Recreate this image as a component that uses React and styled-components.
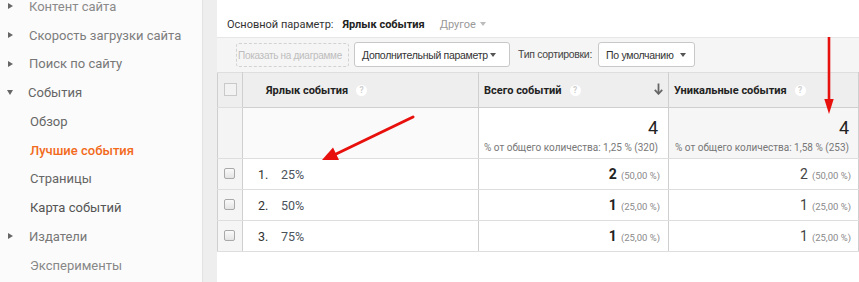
import styled, { createGlobalStyle } from "styled-components";

const GlobalStyle = createGlobalStyle`
  html, body {
    margin: 0;
    padding: 0;
    height: 282px;
    overflow: hidden;
    background: #eeeeee;
  }
  body {
    font-family: Roboto, "Liberation Sans", Arial, sans-serif;
    color: #333;
  }
`;

const Page = styled.div`
  position: relative;
  display: flex;
  gap: 14px;
  width: 859px;
  height: 282px;
  background: #eeeeee;
  overflow: hidden;
`;

const Sidebar = styled.nav`
  width: 203px;
  flex-shrink: 0;
  box-sizing: border-box;
  background: #fbfbfb;
  border-right: 1px solid #e2e2e2;
`;

const NavList = styled.ul`
  list-style: none;
  margin: -8px 0 0;
  padding: 0;
`;

const NavItem = styled.li`
  display: flex;
  align-items: center;
  height: 28.75px;
  padding-left: ${(p) => (p.$sub ? "30px" : "8px")};
  font-size: 13px;
  font-weight: ${(p) => (p.$active ? 500 : 400)};
  color: ${(p) => (p.$active ? "#f26a1b" : p.$color || "#6f6f6f")};
  white-space: nowrap;
`;

const Caret = styled.span`
  width: 0;
  height: 0;
  margin-right: ${(p) => (p.$open ? "15px" : "16px")};
  ${(p) =>
    p.$open
      ? `border-top: 5px solid #666;
         border-left: 3.5px solid transparent;
         border-right: 3.5px solid transparent;
         margin-left: -1px;`
      : `border-left: 5px solid #666;
         border-top: 3.5px solid transparent;
         border-bottom: 3.5px solid transparent;`}
`;

const Main = styled.main`
  flex: 1;
  display: flex;
  flex-direction: column;
  background: #fff;
`;

const DimensionBar = styled.div`
  height: 38px;
  box-sizing: border-box;
  display: flex;
  align-items: center;
  padding: 11px 0 0 10px;
  font-size: 11px;
  color: #333;
  border-bottom: 1px solid #e6e6e6;
`;

const PrimaryValue = styled.span`
  font-weight: 700;
  margin-left: 9px;
  color: #222;
`;

const OtherLink = styled.span`
  margin-left: 15px;
  color: #999;
  display: flex;
  align-items: center;
  gap: 4px;
`;

const SmallDown = styled.span`
  flex-shrink: 0;
  width: 0;
  height: 0;
  border-top: 4px solid ${(p) => p.$color || "#bbb"};
  border-left: 3.5px solid transparent;
  border-right: 3.5px solid transparent;
`;

const Toolbar = styled.div`
  height: 34px;
  box-sizing: border-box;
  display: flex;
  align-items: flex-start;
  padding: 5px 0 0 19px;
  background: #f5f5f5;
  font-family: "Liberation Sans", Arial, sans-serif;
  font-size: 10px;
  letter-spacing: -0.3px;
`;

const ChartButton = styled.div`
  width: 113px;
  height: 24px;
  flex-shrink: 0;
  box-sizing: border-box;
  border: 1px dashed #d2d2d2;
  border-radius: 3px;
  display: flex;
  align-items: center;
  color: #bdbdbd;
  white-space: nowrap;
  overflow: hidden;
  padding-left: 1px;
`;

const SelectButton = styled.div`
  width: ${(p) => p.$width}px;
  min-width: 0;
  flex-shrink: 0;
  height: 25px;
  box-sizing: border-box;
  margin-left: ${(p) => p.$gap || 0}px;
  margin-top: -1px;
  border: 1px solid #c8c8c8;
  border-radius: 3px;
  background: #fff;
  display: flex;
  align-items: center;
  justify-content: space-between;
  padding: 0 ${(p) => p.$padRight || 13}px 0 7px;
  color: #333;
  font-size: 10.5px;
  white-space: nowrap;
  overflow: hidden;
`;

const ToolbarLabel = styled.span`
  margin-left: 8px;
  line-height: 23px;
  color: #444;
  font-size: 10.5px;
`;

const Table = styled.table`
  border-collapse: collapse;
  table-layout: fixed;
  width: 642px;
  font-size: 12px;
`;

const HeadCell = styled.th`
  height: 35px;
  box-sizing: border-box;
  padding: 0 0 0 ${(p) => p.$pad || 5}px;
  background: #eeeeee;
  border: 1px solid #cfcfcf;
  border-top-color: #dedede;
  text-align: left;
  font-size: 11px;
  font-weight: 700;
  color: #222;
  vertical-align: middle;
`;

const HeadInner = styled.div`
  display: flex;
  align-items: center;
  padding-right: 5px;
`;

const Help = styled.span`
  width: 11px;
  height: 11px;
  border-radius: 50%;
  background: #fff;
  color: #cfcfcf;
  font-size: 8.5px;
  font-weight: 700;
  line-height: 11px;
  text-align: center;
  margin-left: 8px;
`;

const SortIcon = styled.svg`
  margin-left: auto;
  margin-top: -2px;
`;

const CheckCell = styled.td`
  width: 25px;
  padding: 0;
  background: ${(p) => p.$bg || "#f5f5f5"};
  border: 1px solid #dedede;
  border-left-color: #cfcfcf;
  border-right-color: #cfcfcf;
  text-align: center;
  vertical-align: ${(p) => p.$align || "top"};
`;

const HeadBox = styled.span`
  display: inline-block;
  width: 11px;
  height: 11px;
  margin-top: 2px;
  background: #f2f2f2;
  border: 1px solid #c9c9c9;
`;

const RowBox = styled.span`
  display: inline-block;
  width: 9px;
  height: 9px;
  margin: 9px 0 0 -1px;
  border: 1px solid #a9a9a9;
  border-radius: 2px;
  background: linear-gradient(#fafafa, #e4e4e4);
`;

const SummaryCell = styled.td`
  height: 51px;
  box-sizing: border-box;
  padding: 0 ${(p) => p.$pad || 10}px 0 0;
  background: ${(p) => p.$bg || "#fff"};
  border: 1px solid #dedede;
  border-right-color: #cfcfcf;
  text-align: right;
  vertical-align: top;
`;

const BigNumber = styled.div`
  font-size: 18px;
  color: #222;
  margin-top: 10px;
  line-height: 20px;
`;

const PercentNote = styled.div`
  font-size: 10px;
  color: #777;
  margin-top: 4px;
  white-space: nowrap;
`;

const Cell = styled.td`
  height: 31px;
  box-sizing: border-box;
  padding: 0 ${(p) => p.$pad || 8}px 0 ${(p) => p.$left || 0}px;
  border: 1px solid #dedede;
  border-right-color: #cfcfcf;
  text-align: ${(p) => (p.$right ? "right" : "left")};
  vertical-align: middle;
  white-space: nowrap;
`;

const Index = styled.span`
  display: inline-block;
  width: 23px;
  color: #333;
  font-size: 12.5px;
`;

const LabelLink = styled.span`
  color: #4b535c;
  font-size: 12.5px;
`;

const Value = styled.span`
  font-size: 14px;
  font-weight: ${(p) => (p.$bold ? 700 : 400)};
  color: ${(p) => (p.$bold ? "#222" : "#444")};
`;

const Share = styled.span`
  margin-left: 4px;
  font-size: 9.5px;
  color: #8a8a8a;
`;

const Annotations = styled.svg`
  position: absolute;
  left: 0;
  top: 0;
  pointer-events: none;
`;

const navItems = [
  { label: "Контент сайта", caret: true, color: "#8a8a8a" },
  { label: "Скорость загрузки сайта", caret: true, color: "#7d7d7d" },
  { label: "Поиск по сайту", caret: true, color: "#777" },
  { label: "События", caret: true, open: true, color: "#666" },
  { label: "Обзор", sub: true, color: "#666" },
  { label: "Лучшие события", sub: true, active: true },
  { label: "Страницы", sub: true, color: "#666" },
  { label: "Карта событий", sub: true, color: "#555" },
  { label: "Издатели", caret: true, color: "#777" },
  { label: "Эксперименты", sub: true, color: "#888" },
];

const rows = [
  { label: "25%", total: 2, share: "50,00 %" },
  { label: "50%", total: 1, share: "25,00 %" },
  { label: "75%", total: 1, share: "25,00 %" },
];

export default function App() {
  return (
    <Page>
      <GlobalStyle />
      <Sidebar>
        <NavList>
          {navItems.map((item) => (
            <NavItem
              key={item.label}
              $sub={item.sub}
              $active={item.active}
              $color={item.color}
            >
              {item.caret && <Caret $open={item.open} />}
              {item.label}
            </NavItem>
          ))}
        </NavList>
      </Sidebar>
      <Main>
        <DimensionBar>
          Основной параметр:
          <PrimaryValue>Ярлык события</PrimaryValue>
          <OtherLink>
            Другое <SmallDown />
          </OtherLink>
        </DimensionBar>
        <Toolbar>
          <ChartButton>Показать на диаграмме</ChartButton>
          <SelectButton $width={156} $gap={5}>
            Дополнительный параметр <SmallDown $color="#555" />
          </SelectButton>
          <ToolbarLabel>Тип сортировки:</ToolbarLabel>
          <SelectButton $width={97} $gap={6} $padRight={8}>
            По умолчанию <SmallDown $color="#555" />
          </SelectButton>
        </Toolbar>
        <Table>
          <colgroup>
            <col style={{ width: 25 }} />
            <col style={{ width: 236 }} />
            <col style={{ width: 190 }} />
            <col style={{ width: 190 }} />
          </colgroup>
          <thead>
            <tr>
              <CheckCell as="th" $bg="#eeeeee" $align="middle">
                <HeadBox />
              </CheckCell>
              <HeadCell $pad={23}>
                <HeadInner>
                  Ярлык события <Help>?</Help>
                </HeadInner>
              </HeadCell>
              <HeadCell>
                <HeadInner>
                  Всего событий <Help>?</Help>
                  <SortIcon width="9" height="12" viewBox="0 0 9 12">
                    <path d="M4.5 0.5V10.5" stroke="#666" strokeWidth="1.8" />
                    <path d="M0.8 6.8L4.5 10.8L8.2 6.8" fill="none" stroke="#666" strokeWidth="1.8" />
                  </SortIcon>
                </HeadInner>
              </HeadCell>
              <HeadCell>
                <HeadInner>
                  Уникальные события <Help>?</Help>
                </HeadInner>
              </HeadCell>
            </tr>
          </thead>
          <tbody>
            <tr>
              <CheckCell $bg="#f4f4f4" />
              <SummaryCell $bg="#fafafa" />
              <SummaryCell>
                <BigNumber>4</BigNumber>
                <PercentNote>% от общего количества: 1,25 % (320)</PercentNote>
              </SummaryCell>
              <SummaryCell $bg="#f6f6f6" $pad={9}>
                <BigNumber>4</BigNumber>
                <PercentNote>% от общего количества: 1,58 % (253)</PercentNote>
              </SummaryCell>
            </tr>
            {rows.map((row, i) => (
              <tr key={row.label}>
                <CheckCell>
                  <RowBox />
                </CheckCell>
                <Cell $left={15}>
                  <Index>{i + 1}.</Index>
                  <LabelLink>{row.label}</LabelLink>
                </Cell>
                <Cell $right>
                  <Value $bold>{row.total}</Value>
                  <Share>({row.share})</Share>
                </Cell>
                <Cell $right $pad={7}>
                  <Value>{row.total}</Value>
                  <Share>({row.share})</Share>
                </Cell>
              </tr>
            ))}
          </tbody>
        </Table>
      </Main>
      <Annotations width="859" height="282" viewBox="0 0 859 282">
        <line x1="413" y1="117" x2="334" y2="155" stroke="#e8100c" strokeWidth="3" strokeLinecap="round" />
        <polygon points="322,160 339,160 333,147.5" fill="#e8100c" />
        <line x1="829" y1="37" x2="829" y2="102" stroke="#e8100c" strokeWidth="2.6" />
        <polygon points="824.3,99 833.7,99 829,114" fill="#e8100c" />
      </Annotations>
    </Page>
  );
}
